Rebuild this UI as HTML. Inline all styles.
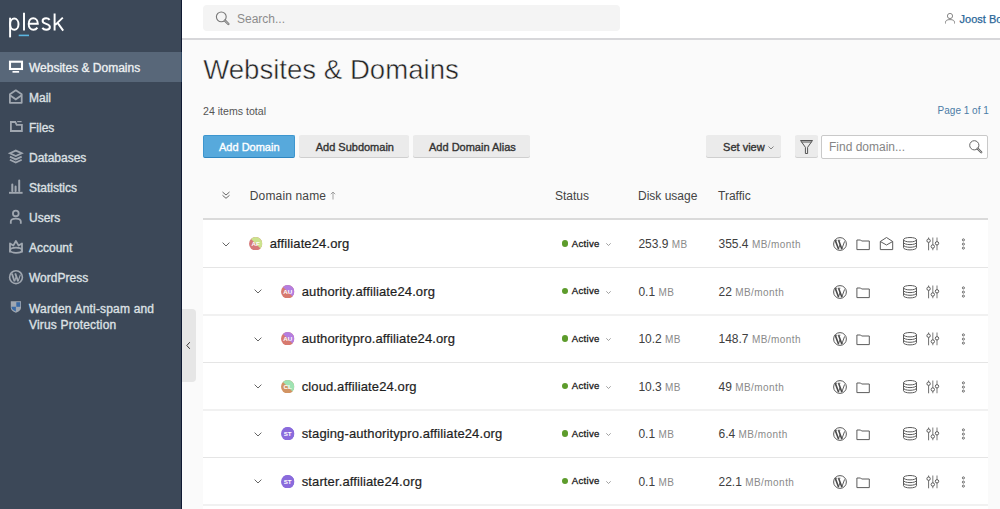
<!DOCTYPE html>
<html><head><meta charset="utf-8">
<style>
*{box-sizing:border-box;margin:0;padding:0}
html,body{width:1000px;height:509px;overflow:hidden;font-family:"Liberation Sans",sans-serif;background:#fafafa;position:relative}
.abs,.dn,.st,.num,.ic,.nt{position:absolute;white-space:nowrap}
#side{position:absolute;left:0;top:0;width:181px;height:509px;background:#3c4858}
#sideline{position:absolute;left:181px;top:0;width:1px;height:509px;background:#101a33}
.act{position:absolute;left:0;top:52px;width:181px;height:30px;background:#586779}
.nt{left:29px;font-size:12px;line-height:14px;color:#dde0e4;-webkit-text-stroke:0.35px #dde0e4}
.si{position:absolute;left:0;top:0}
#hdr{position:absolute;left:182px;top:0;width:818px;height:40px;background:#fff;border-bottom:2px solid #d7d7da}
#search{position:absolute;left:203px;top:5px;width:417px;height:26px;background:#f4f4f4;border-radius:4px}
.btn{position:absolute;top:135px;height:22px;background:#ebebeb;box-shadow:0 1px 0 #cfcfcf;border-radius:2px}
.bt{position:absolute;font-size:11px;color:#333;line-height:14px;top:140px;-webkit-text-stroke:0.35px #333}
#tbl{position:absolute;left:203px;top:218px;width:785px;height:300px;background:#fff;border-top:2px solid #dadada}
.rb{position:absolute;left:203px;width:785px;height:1px;background:#e5e5e5}
.dn{font-size:13px;line-height:14px;color:#1e1e1e;-webkit-text-stroke:0.2px #1e1e1e;letter-spacing:0.12px}
.st{left:571.8px;font-size:9.6px;line-height:12px;color:#1a1a1a;letter-spacing:0.3px;-webkit-text-stroke:0.3px #1a1a1a}
.dot{position:absolute;left:561.5px;width:6.9px;height:6.9px;border-radius:50%;background:#5d9c2c}
.num{font-size:12px;line-height:14px;color:#404040}
.num span{font-size:10px;color:#8a8a8a;letter-spacing:0.45px}

</style></head><body>
<svg width="0" height="0" style="position:absolute">
<defs>
<g id="wp" fill="none" stroke="#4a4a4a">
  <circle cx="8" cy="8" r="6.4" stroke-width="0.9"/>
  <path d="M3.3 4.4L6.6 13.2M6.6 4.2L9.9 13.2" stroke-width="1.6"/>
  <path d="M6.4 13L8.2 8.3M9.8 13L12.6 5.4" stroke-width="0.9"/>
  <path d="M2.5 4.3H5.2M5.8 4.2H8.4" stroke-width="0.7"/>
</g>
<g id="acts" fill="none" stroke="#5c5c5c" stroke-width="1">
  <use href="#wp"/>
  <path d="M24.9 13.6V4H28.6L29.6 5H37.3V13.6Z" stroke-linejoin="round"/>
  <ellipse cx="78" cy="3.7" rx="6.5" ry="2.2"/>
  <path d="M71.5 3.7V11.7A6.5 2.2 0 0 0 84.5 11.7V3.7M71.5 6.4A6.5 2.2 0 0 0 84.5 6.4M71.5 9.1A6.5 2.2 0 0 0 84.5 9.1" />
  <path d="M96.6 1.5V14.3" stroke-width="0.9"/>
  <path d="M100.8 1.5V14.3M105 1.5V14.3" stroke-width="1.1" stroke="#888"/>
  <circle cx="96.6" cy="4.7" r="1.7" fill="#fff"/>
  <circle cx="100.8" cy="10.5" r="1.7" fill="#fff"/>
  <circle cx="105" cy="7.3" r="1.7" fill="#fff"/>
  <circle cx="131.4" cy="3.9" r="1.05" stroke-width="0.9"/>
  <circle cx="131.4" cy="8.1" r="1.05" stroke-width="0.9"/>
  <circle cx="131.4" cy="12.1" r="1.05" stroke-width="0.9"/>
</g>
<g id="mail" fill="none" stroke="#5c5c5c" stroke-width="1" stroke-linejoin="round">
  <path d="M48.3 5.5L54.5 1.5L60.7 5.5V13.6H48.3Z"/>
  <path d="M48.3 5.5L54.5 9L60.7 5.5"/>
</g>
</defs>
</svg>
<div id="side">
  <svg class="si" width="80" height="45" viewBox="0 0 80 45" fill="none" stroke="#fff" stroke-width="1.95">
    <path d="M10.1 37.4V17.7"/>
    <ellipse cx="14.3" cy="24.15" rx="4.2" ry="5.55"/>
    <path d="M24 12.7V30.5"/>
    <path d="M28.7 23.7H37.8C37.8 20.6 36 18.3 33.2 18.3C30.4 18.3 28.7 20.8 28.7 24C28.7 27.3 30.6 29.7 33.4 29.7C35.1 29.7 36.5 28.9 37.4 27.6"/>
    <path d="M49.6 19.9C48.8 18.8 47.6 18.3 46.1 18.3C44 18.3 42.6 19.4 42.6 21C42.6 24.6 49.9 23.2 49.9 26.9C49.9 28.6 48.4 29.7 46.2 29.7C44.6 29.7 43.2 29.1 42.3 27.9"/>
    <path d="M54.6 13.5V30.6M62.8 17.6L55.3 24.9M57.6 22.9L63.2 30.6"/>
    <rect x="18.7" y="34.6" width="10.3" height="1.6" fill="#5bb5e0" stroke="none"/>
  </svg>
  <div class="act"></div>
  <svg class="si" width="30" height="340" viewBox="0 0 30 340" fill="none" stroke="#a0a7b0" stroke-width="1.8">
    <rect x="10" y="61.7" width="12" height="7.3" stroke="#fff" stroke-width="2.1"/>
    <rect x="12.5" y="71" width="6.6" height="1.7" fill="#fff" stroke="none"/>
    <path d="M9.9 94.2L15.8 90.3L21.7 94.2V102.8H9.9Z" stroke-linejoin="round"/>
    <path d="M9.9 95.3L15.8 99.3L21.7 95.3"/>
    <path d="M10.9 131V122H15.3L16.7 124.8H21.9V131Z"/>
    <path d="M17.2 121.6H21.6" stroke-width="1.2"/>
    <path d="M9.9 153.3L15.8 150.6L21.7 153.3L15.8 156Z"/>
    <path d="M9.9 156.6L15.8 159.4L21.7 156.6M9.9 159.8L15.8 162.6L21.7 159.8"/>
    <path d="M9 192.8H22.6" stroke-width="1.9"/>
    <path d="M12.3 191V184.5M15.6 191V186.6M19.2 191V180.5" stroke-width="2" stroke-linecap="round"/>
    <circle cx="15.8" cy="213.4" r="2.85"/>
    <path d="M10.8 223.8V221.6Q10.8 218.6 15.8 218.6Q20.8 218.6 20.8 221.6V223.8"/>
    <path d="M10 252.5V243.4L13.3 245.6L15.9 241L18.6 245.6L22 243.4V252.5" stroke-linejoin="round"/>
    <ellipse cx="16" cy="250.2" rx="5.9" ry="2.6"/>
    <circle cx="16" cy="277.2" r="6.4" stroke-width="1.6"/>
    <path d="M11.9 273.6L14.6 281.4M15.2 273.4L18.1 281.4" stroke-width="1.8"/>
    <path d="M14.6 281.2L16.3 276.6M18.1 281.2L20.4 274.6" stroke-width="1.1"/>
    <path d="M10.8 301.2H21V307.5Q21 311 15.9 312.8Q10.8 311 10.8 307.5Z" fill="#a0a7b0" stroke="none"/>
    <path d="M16.3 302.2H20.2V306.8H16.3Z" fill="#3a6aa5" stroke="none"/>
    <path d="M11.6 306.8H15.9V311.4Q11.6 309.8 11.6 307.5Z" fill="#3a6aa5" stroke="none"/>
  </svg>
  <div class="nt" style="top:61px;color:#fff">Websites &amp; Domains</div>
  <div class="nt" style="top:91px">Mail</div>
  <div class="nt" style="top:121px">Files</div>
  <div class="nt" style="top:151px">Databases</div>
  <div class="nt" style="top:181px">Statistics</div>
  <div class="nt" style="top:211px">Users</div>
  <div class="nt" style="top:241px">Account</div>
  <div class="nt" style="top:271px">WordPress</div>
  <div class="nt" style="top:300.5px;line-height:16.3px;letter-spacing:0.18px">Warden Anti-spam and<br>Virus Protection</div>
</div>
<div id="sideline"></div><div class="abs" style="left:181px;top:52px;width:1px;height:30px;background:#2f4763"></div>
<div id="hdr"></div>
<div id="search"></div>
<svg class="ic" style="left:210px;top:6px" width="24" height="24" viewBox="0 0 24 24" fill="none" stroke="#777" stroke-width="1.1">
  <circle cx="11.3" cy="10.85" r="4.9"/>
  <path d="M15 14.6L18.4 18" stroke-width="2.4" stroke-linecap="round"/>
  <path d="M15 14.6L18.4 18" stroke="#f3f3f3" stroke-width="0.6" stroke-linecap="round"/>
</svg>
<div class="abs" style="left:237px;top:12px;font-size:12px;line-height:14px;color:#8c8c8c">Search...</div>
<svg class="ic" style="left:944px;top:12px" width="12" height="13" viewBox="0 0 12 13" fill="none" stroke="#888" stroke-width="1">
  <circle cx="6" cy="4" r="2.6"/>
  <path d="M1.5 11.5V10.3Q1.5 7.6 6 7.6Q10.5 7.6 10.5 10.3V11.5"/>
</svg>
<div class="abs" style="left:959.6px;top:13.2px;font-size:11px;line-height:12px;color:#2a6799;-webkit-text-stroke:0.25px #2a6799">Joost Boer</div>

<div class="abs" style="left:203.2px;top:53.7px;font-size:27.6px;line-height:31px;color:#222;-webkit-text-stroke:0.5px #fafafa">Websites &amp; Domains</div>
<div class="abs" style="left:203px;top:104.7px;font-size:10.6px;line-height:12px;color:#555">24 items total</div>
<div class="abs" style="left:937.6px;top:105.3px;font-size:10px;line-height:12px;color:#4c7ca6">Page 1 of 1</div>

<div class="btn" style="left:203px;width:92px;height:23px;background:#57a9dc;border:1px solid #3d96cf;border-bottom-color:#2f86c0;box-shadow:none"></div>
<div class="bt" style="left:219px;color:#fff;-webkit-text-stroke:0.35px #fff">Add Domain</div>
<div class="btn" style="left:299px;width:110px"></div>
<div class="bt" style="left:315.7px">Add Subdomain</div>
<div class="btn" style="left:413px;width:117px"></div>
<div class="bt" style="left:429px">Add Domain Alias</div>
<div class="btn" style="left:706.3px;width:75px"></div>
<div class="bt" style="left:723.1px">Set view</div>
<svg class="ic" style="left:768px;top:146px" width="6" height="4" viewBox="0 0 6 4"><path d="M0.5 0.5L3 3L5.5 0.5" fill="none" stroke="#777" stroke-width="0.9"/></svg>
<div class="btn" style="left:795px;width:23px"></div>
<svg class="ic" style="left:799px;top:139px" width="15" height="16" viewBox="0 0 15 16" fill="none" stroke="#555" stroke-width="1" stroke-linejoin="round">
  <path d="M1.5 1.5H13.5L8.6 8.3V14.5H6.4V8.3Z"/>
  <path d="M2.5 3H12.5"/>
</svg>
<div class="abs" style="left:821px;top:135px;width:167px;height:23.5px;background:#fff;border:1px solid #c9c9c9;border-radius:2px"></div>
<div class="abs" style="left:829px;top:140.4px;font-size:12px;line-height:14px;color:#858585">Find domain...</div>
<svg class="ic" style="left:968px;top:139px" width="16" height="16" viewBox="0 0 16 16" fill="none" stroke="#666" stroke-width="1">
  <circle cx="6.3" cy="6.3" r="4.6"/>
  <path d="M9.6 9.6L13.3 13.3" stroke-width="2.2" stroke-linecap="round"/>
  <path d="M9.6 9.6L13.3 13.3" stroke="#fff" stroke-width="0.5" stroke-linecap="round"/>
</svg>

<svg class="ic" style="left:221px;top:190px" width="10" height="10" viewBox="0 0 10 10" fill="none" stroke="#666" stroke-width="1"><path d="M1.5 2L5 5L8.5 2M1.5 5.3L5 8.3L8.5 5.3"/></svg>
<div class="abs" style="left:249.8px;top:188.8px;font-size:12px;line-height:14px;color:#444;letter-spacing:0.15px">Domain name</div>
<svg class="ic" style="left:329.5px;top:191px" width="6" height="9" viewBox="0 0 6 9" fill="none" stroke="#999" stroke-width="0.9"><path d="M3 8.5V1M0.8 3.2L3 1L5.2 3.2"/></svg>
<div class="abs" style="left:555px;top:188.8px;font-size:12px;line-height:14px;color:#444">Status</div>
<div class="abs" style="left:638px;top:188.8px;font-size:12px;line-height:14px;color:#444">Disk usage</div>
<div class="abs" style="left:718px;top:188.8px;font-size:12px;line-height:14px;color:#444">Traffic</div>

<div id="tbl"></div>
<div class="rb" style="top:267px"></div>
<svg class="ic" style="left:222px;top:241.9px" width="8" height="5" viewBox="0 0 8 5"><path d="M0.6 0.6L4 4L7.4 0.6" fill="none" stroke="#666" stroke-width="1"/></svg>
<svg class="ic" style="left:249.3px;top:237.1px" width="13.4" height="13.4" viewBox="0 0 20 20"><defs><clipPath id="c0"><circle cx="10" cy="10" r="10"/></clipPath></defs><g clip-path="url(#c0)"><rect width="20" height="20" fill="#d67a7a"/><path d="M0 0H20V20Z" fill="#cbe38e"/></g><text x="10" y="13.5" text-anchor="middle" font-family="Liberation Sans" font-weight="bold" font-size="9.3" fill="#fff">AF</text></svg>
<div class="dn" style="left:269.7px;top:237.3px">affiliate24.org</div>
<div class="dot" style="top:240.2px"></div>
<div class="st" style="top:237.7px">Active</div>
<svg class="ic" style="left:605.6px;top:243.1px" width="5" height="3" viewBox="0 0 5 3"><path d="M0.3 0.3L2.5 2.5L4.7 0.3" fill="none" stroke="#888" stroke-width="0.8"/></svg>
<div class="num" style="left:638.4px;top:237.4px">253.9 <span>MB</span></div>
<div class="num" style="left:718.5px;top:237.4px">355.4 <span>MB/month</span></div>
<svg class="ic" style="left:832px;top:236.1px" width="140" height="16"><use href="#acts"/><use href="#mail"/></svg>
<div class="rb" style="top:314px;height:2px;background:#f1f1f1"></div>
<svg class="ic" style="left:254px;top:289.4px" width="8" height="5" viewBox="0 0 8 5"><path d="M0.6 0.6L4 4L7.4 0.6" fill="none" stroke="#666" stroke-width="1"/></svg>
<svg class="ic" style="left:281.3px;top:284.6px" width="13.4" height="13.4" viewBox="0 0 20 20"><defs><clipPath id="c1"><circle cx="10" cy="10" r="10"/></clipPath></defs><g clip-path="url(#c1)"><rect width="20" height="20" fill="#d77a6f"/><path d="M0 0H20V20Z" fill="#b47ee0"/></g><text x="10" y="13.5" text-anchor="middle" font-family="Liberation Sans" font-weight="bold" font-size="9.3" fill="#fff">AU</text></svg>
<div class="dn" style="left:301.7px;top:284.9px">authority.affiliate24.org</div>
<div class="dot" style="top:287.6px"></div>
<div class="st" style="top:285.1px">Active</div>
<svg class="ic" style="left:605.6px;top:290.6px" width="5" height="3" viewBox="0 0 5 3"><path d="M0.3 0.3L2.5 2.5L4.7 0.3" fill="none" stroke="#888" stroke-width="0.8"/></svg>
<div class="num" style="left:638.4px;top:284.9px">0.1 <span>MB</span></div>
<div class="num" style="left:718.5px;top:284.9px">22 <span>MB/month</span></div>
<svg class="ic" style="left:832px;top:283.6px" width="140" height="16"><use href="#acts"/></svg>
<div class="rb" style="top:362px"></div>
<svg class="ic" style="left:254px;top:336.9px" width="8" height="5" viewBox="0 0 8 5"><path d="M0.6 0.6L4 4L7.4 0.6" fill="none" stroke="#666" stroke-width="1"/></svg>
<svg class="ic" style="left:281.3px;top:332.1px" width="13.4" height="13.4" viewBox="0 0 20 20"><defs><clipPath id="c2"><circle cx="10" cy="10" r="10"/></clipPath></defs><g clip-path="url(#c2)"><rect width="20" height="20" fill="#d77a6f"/><path d="M0 0H20V20Z" fill="#b47ee0"/></g><text x="10" y="13.5" text-anchor="middle" font-family="Liberation Sans" font-weight="bold" font-size="9.3" fill="#fff">AU</text></svg>
<div class="dn" style="left:301.7px;top:332.4px">authoritypro.affiliate24.org</div>
<div class="dot" style="top:335.1px"></div>
<div class="st" style="top:332.6px">Active</div>
<svg class="ic" style="left:605.6px;top:338.1px" width="5" height="3" viewBox="0 0 5 3"><path d="M0.3 0.3L2.5 2.5L4.7 0.3" fill="none" stroke="#888" stroke-width="0.8"/></svg>
<div class="num" style="left:638.4px;top:332.4px">10.2 <span>MB</span></div>
<div class="num" style="left:718.5px;top:332.4px">148.7 <span>MB/month</span></div>
<svg class="ic" style="left:832px;top:331.1px" width="140" height="16"><use href="#acts"/></svg>
<div class="rb" style="top:409px;height:2px;background:#f1f1f1"></div>
<svg class="ic" style="left:254px;top:384.4px" width="8" height="5" viewBox="0 0 8 5"><path d="M0.6 0.6L4 4L7.4 0.6" fill="none" stroke="#666" stroke-width="1"/></svg>
<svg class="ic" style="left:281.3px;top:379.6px" width="13.4" height="13.4" viewBox="0 0 20 20"><defs><clipPath id="c3"><circle cx="10" cy="10" r="10"/></clipPath></defs><g clip-path="url(#c3)"><rect width="20" height="20" fill="#d29463"/><path d="M0 0H20V20Z" fill="#9fe3b3"/></g><text x="10" y="13.5" text-anchor="middle" font-family="Liberation Sans" font-weight="bold" font-size="9.3" fill="#fff">CL</text></svg>
<div class="dn" style="left:301.7px;top:379.9px">cloud.affiliate24.org</div>
<div class="dot" style="top:382.6px"></div>
<div class="st" style="top:380.1px">Active</div>
<svg class="ic" style="left:605.6px;top:385.6px" width="5" height="3" viewBox="0 0 5 3"><path d="M0.3 0.3L2.5 2.5L4.7 0.3" fill="none" stroke="#888" stroke-width="0.8"/></svg>
<div class="num" style="left:638.4px;top:379.9px">10.3 <span>MB</span></div>
<div class="num" style="left:718.5px;top:379.9px">49 <span>MB/month</span></div>
<svg class="ic" style="left:832px;top:378.6px" width="140" height="16"><use href="#acts"/></svg>
<div class="rb" style="top:457px"></div>
<svg class="ic" style="left:254px;top:431.9px" width="8" height="5" viewBox="0 0 8 5"><path d="M0.6 0.6L4 4L7.4 0.6" fill="none" stroke="#666" stroke-width="1"/></svg>
<svg class="ic" style="left:281.3px;top:427.1px" width="13.4" height="13.4" viewBox="0 0 20 20"><defs><clipPath id="c4"><circle cx="10" cy="10" r="10"/></clipPath></defs><g clip-path="url(#c4)"><rect width="20" height="20" fill="#8a6bdc"/><path d="M0 0H20V20Z" fill="#8a6bdc"/></g><text x="10" y="13.5" text-anchor="middle" font-family="Liberation Sans" font-weight="bold" font-size="9.3" fill="#fff">ST</text></svg>
<div class="dn" style="left:301.7px;top:427.4px">staging-authoritypro.affiliate24.org</div>
<div class="dot" style="top:430.1px"></div>
<div class="st" style="top:427.6px">Active</div>
<svg class="ic" style="left:605.6px;top:433.1px" width="5" height="3" viewBox="0 0 5 3"><path d="M0.3 0.3L2.5 2.5L4.7 0.3" fill="none" stroke="#888" stroke-width="0.8"/></svg>
<div class="num" style="left:638.4px;top:427.4px">0.1 <span>MB</span></div>
<div class="num" style="left:718.5px;top:427.4px">6.4 <span>MB/month</span></div>
<svg class="ic" style="left:832px;top:426.1px" width="140" height="16"><use href="#acts"/></svg>
<div class="rb" style="top:504px;height:2px;background:#f1f1f1"></div>
<svg class="ic" style="left:254px;top:479.4px" width="8" height="5" viewBox="0 0 8 5"><path d="M0.6 0.6L4 4L7.4 0.6" fill="none" stroke="#666" stroke-width="1"/></svg>
<svg class="ic" style="left:281.3px;top:474.6px" width="13.4" height="13.4" viewBox="0 0 20 20"><defs><clipPath id="c5"><circle cx="10" cy="10" r="10"/></clipPath></defs><g clip-path="url(#c5)"><rect width="20" height="20" fill="#8a6bdc"/><path d="M0 0H20V20Z" fill="#8a6bdc"/></g><text x="10" y="13.5" text-anchor="middle" font-family="Liberation Sans" font-weight="bold" font-size="9.3" fill="#fff">ST</text></svg>
<div class="dn" style="left:301.7px;top:474.9px">starter.affiliate24.org</div>
<div class="dot" style="top:477.6px"></div>
<div class="st" style="top:475.1px">Active</div>
<svg class="ic" style="left:605.6px;top:480.6px" width="5" height="3" viewBox="0 0 5 3"><path d="M0.3 0.3L2.5 2.5L4.7 0.3" fill="none" stroke="#888" stroke-width="0.8"/></svg>
<div class="num" style="left:638.4px;top:474.9px">0.1 <span>MB</span></div>
<div class="num" style="left:718.5px;top:474.9px">22.1 <span>MB/month</span></div>
<svg class="ic" style="left:832px;top:473.6px" width="140" height="16"><use href="#acts"/></svg>
<div class="abs" style="left:182px;top:309px;width:14px;height:73px;background:#e6e6e6;border-radius:0 4px 4px 0"></div>
<svg class="ic" style="left:185px;top:341px" width="7" height="9" viewBox="0 0 7 9"><path d="M4.8 1.2L1.8 4.5L4.8 7.8" fill="none" stroke="#333" stroke-width="1"/></svg>

</body></html>
